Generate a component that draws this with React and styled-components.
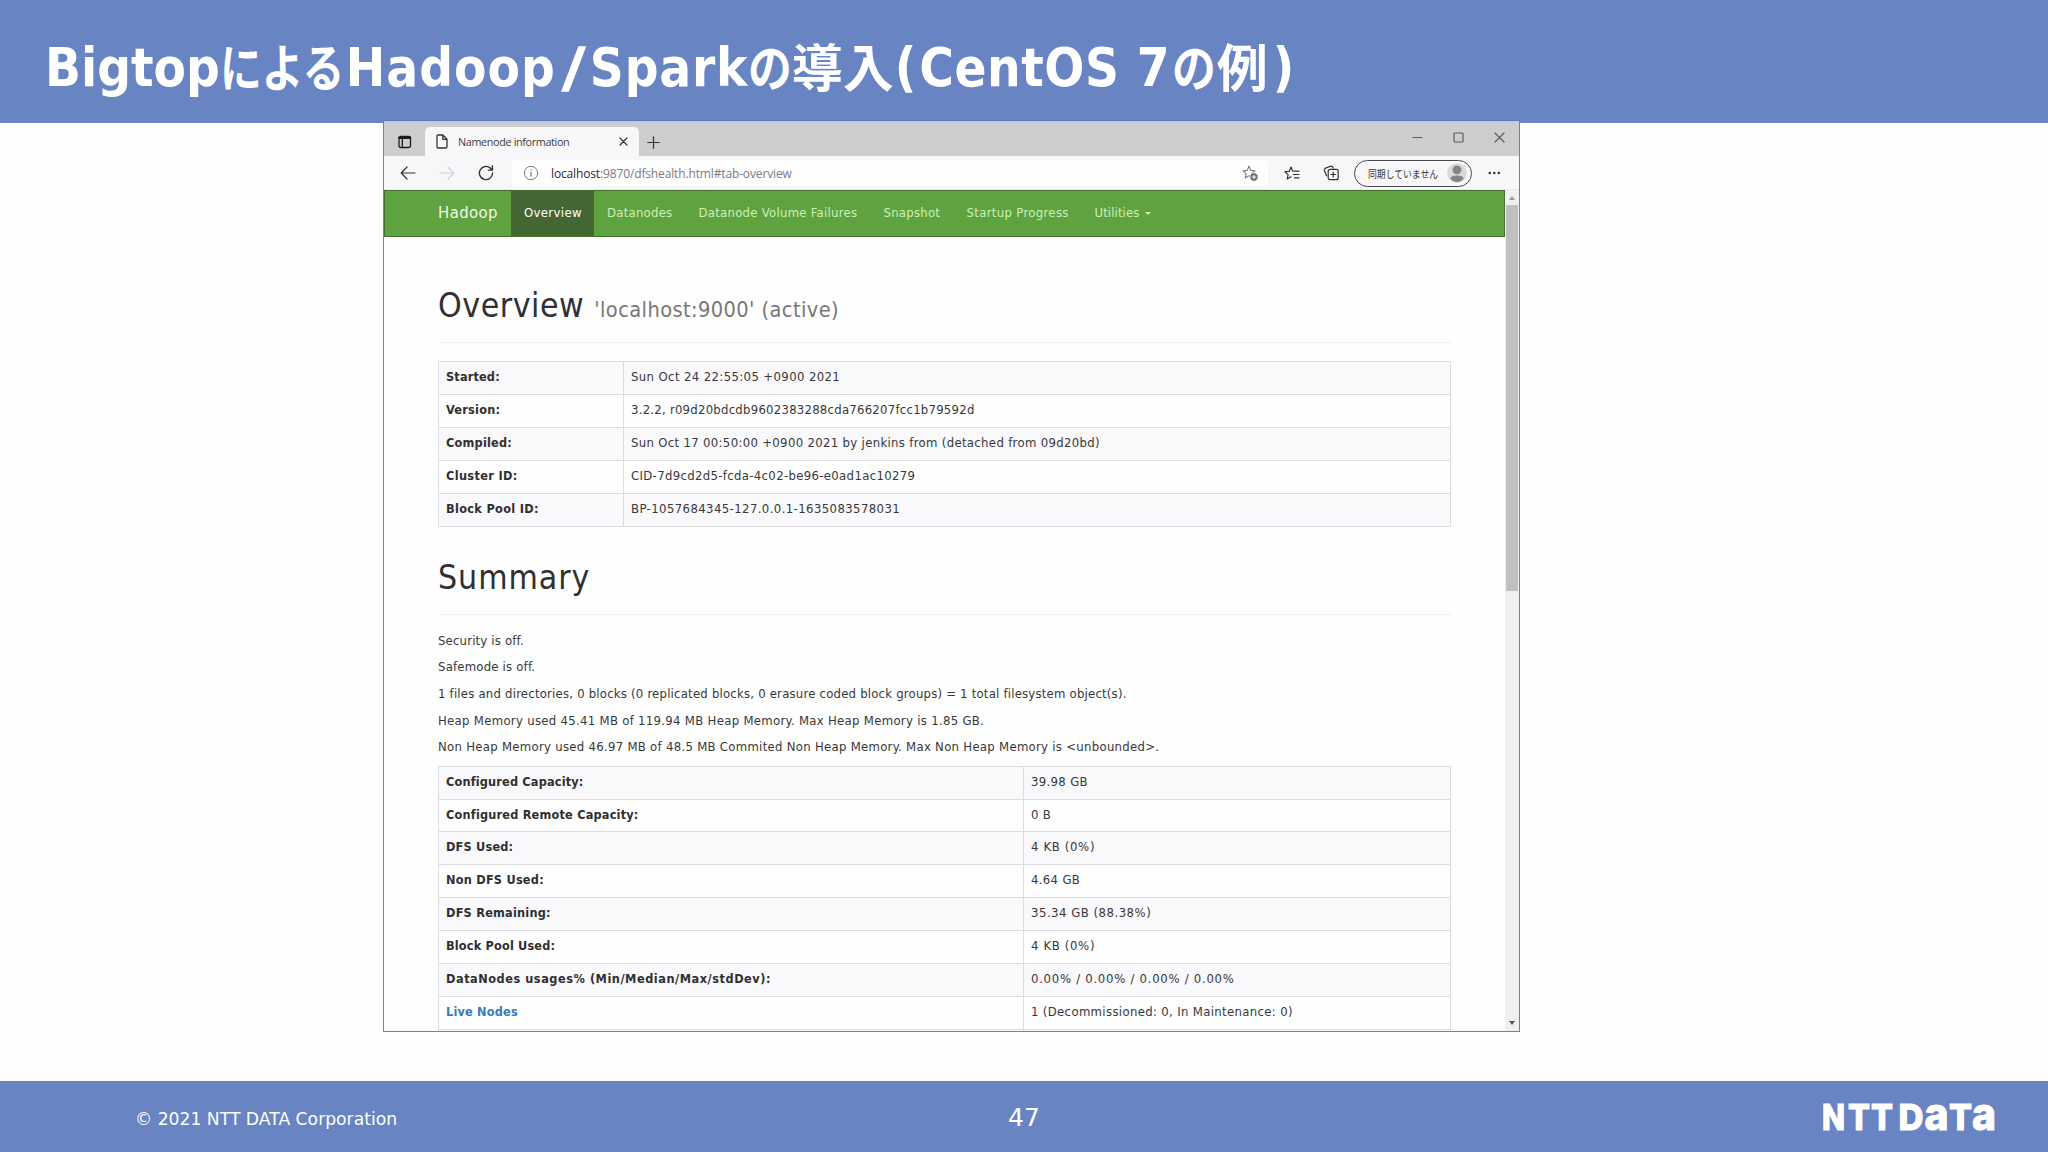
import React from "react";
import styled, { createGlobalStyle } from "styled-components";

const ui = '"DejaVu Sans Condensed", "DejaVu Sans", "Noto Sans CJK JP", sans-serif';
const uiWide = '"DejaVu Sans", "Noto Sans CJK JP", sans-serif';
const chrome = '"Open Sans", "Noto Sans", "Noto Sans CJK JP", sans-serif';

const GlobalStyle = createGlobalStyle`
  * { box-sizing: border-box; }
  body { margin: 0; background: #fefefe; overflow: hidden; }
`;

const Slide = styled.div`
  width: 2048px;
  height: 1152px;
  display: flex;
  flex-direction: column;
  background: #fefefe;
  font-family: ${ui};
  font-stretch: condensed;
`;

const TitleBar = styled.header`
  flex: none;
  height: 123px;
  padding: 31px 0 0 45px;
  background: #6884c2;
  color: #fff;
`;

const Title = styled.h1`
  margin: 0;
  display: flex;
  font-size: 52.5px;
  line-height: 74px;
  font-weight: 700;
  white-space: pre;
`;

const Latin = styled.span`
  width: ${(p) => (p.$width ? `${p.$width}px` : "auto")};
  letter-spacing: ${(p) => p.$track || 0}px;
`;

const Slash = styled.span`
  width: 31px;
  padding-left: 7px;
  font-weight: 400;
  -webkit-text-stroke: 1.6px #fff;
  transform: scaleX(1.4);
`;

const Japanese = styled.span`
  font-family: "Noto Sans CJK JP", sans-serif;
  font-size: 51px;
  line-height: 68px;
  width: ${(p) => p.$width}px;
  transform: scaleX(${(p) => p.$squeeze || 1});
  transform-origin: 0 50%;
`;

const Body = styled.main`
  flex: 1;
  min-height: 0;
  padding-left: 383px;
`;

const Footer = styled.footer`
  flex: none;
  height: 71px;
  display: grid;
  grid-template-columns: 1fr 60px 1fr;
  align-items: center;
  padding: 4px 52px 0;
  background: #6884c2;
  color: #fff;
  font-family: ${uiWide};
  font-stretch: normal;
`;

const Copyright = styled.span`
  margin-left: 83px;
  font-size: 17.2px;
`;

const PageNumber = styled.span`
  margin-top: -2px;
  font-size: 25px;
  text-align: center;
`;

const Logo = styled.svg`
  justify-self: end;
  display: block;
  overflow: visible;
  fill: #fff;
  stroke: #fff;
  stroke-width: 1px;
  font-family: Inter, sans-serif;
  font-weight: 800;
`;

const Window = styled.section`
  width: 1137px;
  height: 912px;
  margin-top: -3px;
  display: flex;
  flex-direction: column;
  border: 1px solid #808084;
  border-top-color: #65789f;
  background: #fefefe;
  position: relative;
  overflow: hidden;
`;

const TabStrip = styled.div`
  flex: none;
  height: 35px;
  display: flex;
  align-items: flex-end;
  background: #cdcccf;
  border-top: 2px solid #bccbe4;
`;

const StripIcon = styled.div`
  width: 41px;
  height: 28px;
  padding: 0 0 0 14px;
  display: flex;
  align-items: center;
`;

const Tab = styled.div`
  width: 214px;
  height: 29px;
  display: flex;
  align-items: center;
  padding: 0 11px 0 11px;
  border-radius: 5px 5px 0 0;
  background: #f8f8fa;
`;

const TabTitle = styled.span`
  flex: 1;
  margin-left: 10px;
  font-family: ${chrome};
  font-stretch: normal;
  font-size: 10.8px;
  letter-spacing: -0.35px;
  white-space: nowrap;
  color: #3b3b3d;
`;

const NewTab = styled.div`
  width: 30px;
  height: 28px;
  padding-left: 8px;
  display: flex;
  align-items: center;
`;

const WindowControls = styled.div`
  height: 37px;
  margin-left: auto;
  padding-right: 14px;
  display: flex;
  align-items: center;
  gap: 30px;
`;

const Toolbar = styled.div`
  flex: none;
  height: 34px;
  padding-top: 1px;
  display: flex;
  align-items: center;
  background: #f7f6f9;
  border-bottom: 1px solid #eceaee;
`;

const NavButtons = styled.div`
  width: 128px;
  padding-left: 16px;
  display: flex;
  align-items: center;
  gap: 23px;
`;

const AddressBar = styled.div`
  width: 756px;
  height: 26px;
  padding: 0 9px 0 11px;
  display: flex;
  align-items: center;
  border-radius: 4px;
  background: #fefefe;
`;

const Url = styled.span`
  flex: 1;
  margin-left: 12px;
  font-family: ${chrome};
  font-stretch: normal;
  font-size: 12px;
  letter-spacing: -0.14px;
  color: #7b7b7e;

  b {
    font-weight: 400;
    color: #2c2c2e;
  }
`;

const ToolbarActions = styled.div`
  display: flex;
  align-items: center;
  margin-left: 16px;
`;

const Favorites = styled.div`
  width: 39px;
  display: flex;
`;

const Collections = styled.div`
  width: 31px;
  display: flex;
`;

const Profile = styled.div`
  width: 118px;
  height: 27px;
  padding: 0 4px 0 13px;
  margin-right: 16px;
  display: flex;
  align-items: center;
  justify-content: space-between;
  border: 1.5px solid #48484b;
  border-radius: 14px;
  font-family: "Noto Sans CJK JP", sans-serif;
  font-size: 10.5px;
  color: #39393b;
  white-space: nowrap;
`;

const ProfileName = styled.span`
  width: 70px;
  transform: scaleX(0.84);
  transform-origin: 0 50%;
`;

const Viewport = styled.div`
  flex: 1;
  min-height: 0;
  display: flex;
`;

const Page = styled.div`
  width: 1121px;
  overflow: hidden;
  color: #38383b;
`;

const Navbar = styled.nav`
  height: 47px;
  display: flex;
  align-items: stretch;
  padding-left: 53px;
  border: 1px solid #46702f;
  background: #5fa341;
`;

const Brand = styled.span`
  width: 73px;
  font-size: 16.6px;
  line-height: 44px;
  letter-spacing: 0.4px;
  color: #f0fae6;
`;

const NavItem = styled.span`
  width: ${(p) => p.$width}px;
  padding-left: 13px;
  font-size: 13px;
  line-height: 44px;
  letter-spacing: ${(p) => p.$track || 0}px;
  white-space: nowrap;
  color: ${(p) => (p.$active ? "#fff" : "#cdf0b6")};
  background: ${(p) => (p.$active ? "#446633" : "transparent")};
`;

const Caret = styled.i`
  display: inline-block;
  margin-left: 6px;
  vertical-align: 2px;
  border: 3.5px solid transparent;
  border-top-color: #cdf0b6;
  border-bottom: 0;
`;

const Content = styled.div`
  padding: 52px 54px 0 54px;
`;

const PageHeader = styled.h2`
  margin: ${(p) => p.$top}px 0 ${(p) => p.$bottom}px;
  height: 54px;
  border-bottom: 1px solid #efeef1;
  font-size: 33.5px;
  line-height: 34.6px;
  font-weight: 400;
  letter-spacing: ${(p) => p.$track || 0}px;
  color: #303033;
  white-space: pre;
`;

const HeaderNote = styled.small`
  margin-left: 10px;
  font-size: 21.6px;
  letter-spacing: 0.42px;
  color: #777779;
`;

const Line = styled.p`
  margin: 0;
  font-size: 13px;
  line-height: 26.67px;
  letter-spacing: ${(p) => p.$track || 0}px;
  white-space: nowrap;
`;

const Table = styled.div`
  margin-top: ${(p) => p.$top || 0}px;
  border: 1px solid #dddce1;
  border-width: 1px 1px 0 1px;
`;

const Row = styled.div`
  display: grid;
  grid-template-columns: ${(p) => p.$first}px 1fr;
  height: 32.89px;
  border-bottom: 1px solid #dddce1;
  font-size: 13px;
  line-height: 30px;
  white-space: nowrap;
  background: ${(p) => (p.$odd ? "#f9f8fb" : "#fefefe")};
`;

const Label = styled.span`
  padding-left: 7px;
  border-right: 1px solid #dddce1;
  font-size: 12.6px;
  font-weight: 700;
  letter-spacing: ${(p) => p.$track || 0}px;
  color: ${(p) => (p.$link ? "#3a7ab8" : "#2f2f32")};
`;

const Value = styled.span`
  padding-left: 7px;
  letter-spacing: ${(p) => p.$track || 0}px;
`;

const Scrollbar = styled.div`
  width: 14px;
  display: flex;
  flex-direction: column;
  align-items: center;
  background: #f0eff2;
`;

const ScrollArrow = styled.i`
  margin: ${(p) => (p.$down ? "auto 0 6px" : "6px 0 5px")};
  border: 3px solid transparent;
  border-width: ${(p) => (p.$down ? "4px 3px 0" : "0 3px 4px")};
  border-top-color: ${(p) => (p.$down ? "#555" : "transparent")};
  border-bottom-color: ${(p) => (p.$down ? "transparent" : "#99999b")};
`;

const Thumb = styled.div`
  width: 12px;
  height: 386px;
  background: #bfbfc1;
`;

const IconSvg = styled.svg`
  flex: none;
  display: block;
  fill: none;
  stroke-linecap: round;
  stroke-linejoin: round;
`;

const Icon = ({ w, h, color = "#333", sw = 1.2, children }) => (
  <IconSvg width={w} height={h} viewBox={`0 0 ${w} ${h}`} stroke={color} strokeWidth={sw}>
    {children}
  </IconSvg>
);

const overview = [
  { label: "Started:", lt: 0.16, value: "Sun Oct 24 22:55:05 +0900 2021", vt: 0.38 },
  { label: "Version:", lt: 0.25, value: "3.2.2, r09d20bdcdb9602383288cda766207fcc1b79592d", vt: 0.245 },
  { label: "Compiled:", lt: 0.22, value: "Sun Oct 17 00:50:00 +0900 2021 by jenkins from (detached from 09d20bd)", vt: 0.325 },
  { label: "Cluster ID:", lt: 0.35, value: "CID-7d9cd2d5-fcda-4c02-be96-e0ad1ac10279", vt: 0.33 },
  { label: "Block Pool ID:", lt: 0.33, value: "BP-1057684345-127.0.0.1-1635083578031", vt: 0.4 },
];

const lines = [
  ["Security is off.", 0.18],
  ["Safemode is off.", 0.2],
  ["1 files and directories, 0 blocks (0 replicated blocks, 0 erasure coded block groups) = 1 total filesystem object(s).", 0.212],
  ["Heap Memory used 45.41 MB of 119.94 MB Heap Memory. Max Heap Memory is 1.85 GB.", 0.3],
  ["Non Heap Memory used 46.97 MB of 48.5 MB Commited Non Heap Memory. Max Non Heap Memory is <unbounded>.", 0.288],
];

const summary = [
  { label: "Configured Capacity:", lt: 0.17, value: "39.98 GB", vt: 0.33 },
  { label: "Configured Remote Capacity:", lt: 0.2, value: "0 B", vt: 0.3 },
  { label: "DFS Used:", lt: 0.2, value: "4 KB (0%)", vt: 0.65 },
  { label: "Non DFS Used:", lt: 0.24, value: "4.64 GB", vt: 0.33 },
  { label: "DFS Remaining:", lt: 0.23, value: "35.34 GB (88.38%)", vt: 0.5 },
  { label: "Block Pool Used:", lt: 0.17, value: "4 KB (0%)", vt: 0.65 },
  { label: "DataNodes usages% (Min/Median/Max/stdDev):", lt: 0.54, value: "0.00% / 0.00% / 0.00% / 0.00%", vt: 0.72 },
  { label: "Live Nodes", lt: 0.2, value: "1 (Decommissioned: 0, In Maintenance: 0)", vt: 0.34, link: true },
  { label: "", value: "" },
];

const navItems = [
  ["Overview", 83, 0.35],
  ["Datanodes", 91.5, 0.25],
  ["Datanode Volume Failures", 185, 0.27],
  ["Snapshot", 83, 0.25],
  ["Startup Progress", 128, 0.33],
  ["Utilities", 90, 0.1],
];

const star = "M7 1 L8.8 5.4 L13 5.7 L10 8.6 L10.6 13 L7 10.8 L3.2 13 L4.1 8.6 L1 5.7 L5.2 5.4 Z";

function DataTable({ rows, first, top }) {
  return (
    <Table $top={top}>
      {rows.map((row, i) => (
        <Row key={i} $first={first} $odd={i % 2 === 0}>
          <Label $link={row.link} $track={row.lt}>{row.label}</Label>
          <Value $track={row.vt}>{row.value}</Value>
        </Row>
      ))}
    </Table>
  );
}

function Browser() {
  return (
    <Window>
      <TabStrip>
        <StripIcon>
          <Icon w={14} h={14} color="#1c1c1e" sw={1.3}>
            <rect x="1" y="1.5" width="11.5" height="11" rx="1.8" />
            <path d="M1.5 2.8H12" strokeWidth="2.6" />
            <path d="M4.3 4V12.5" />
          </Icon>
        </StripIcon>
        <Tab>
          <Icon w={12} h={15} sw={1.3}>
            <path d="M1 2.2Q1 1 2.2 1H6.8L11 5.3V12.8Q11 14 9.8 14H2.2Q1 14 1 12.8Z M6.8 1V5.3H11" />
          </Icon>
          <TabTitle>Namenode information</TabTitle>
          <Icon w={9} h={9}><path d="M1 1L8 8M8 1L1 8" /></Icon>
        </Tab>
        <NewTab>
          <Icon w={13} h={13}><path d="M6.5 .8V12.2M.8 6.5H12.2" /></Icon>
        </NewTab>
        <WindowControls>
          <Icon w={11} h={11} color="#5d5d60" sw={1}><path d="M1 5.5H10" /></Icon>
          <Icon w={11} h={11} color="#5d5d60"><rect x="1" y="1" width="9" height="9" rx="1" /></Icon>
          <Icon w={11} h={11} color="#5d5d60"><path d="M1 1L10 10M10 1L1 10" /></Icon>
        </WindowControls>
      </TabStrip>
      <Toolbar>
        <NavButtons>
          <Icon w={16} h={14}><path d="M15 7H1.2M7 1L1.2 7L7 13" /></Icon>
          <Icon w={16} h={14} color="#d2d1d5"><path d="M1 7H14.8M9 1L14.8 7L9 13" /></Icon>
          <Icon w={16} h={16} sw={1.4}>
            <path d="M14.6 8A6.6 6.6 0 1 1 12.6 3.3L14.3 5M14.4 1V5.1H10.4" />
          </Icon>
        </NavButtons>
        <AddressBar>
          <Icon w={16} h={16} color="#7c7c7f" sw={1}>
            <circle cx="8" cy="8" r="6.7" />
            <path d="M8 7.3V11M8 4.8V5" strokeWidth="1.3" />
          </Icon>
          <Url><b>localhost</b>:9870/dfshealth.html#tab-overview</Url>
          <Icon w={17} h={17} color="#7c7c7f" sw={1.1}>
            <path d={star} />
            <circle cx="12" cy="12" r="4.2" fill="#68686b" stroke="#fefefe" strokeWidth=".8" />
            <path d="M12 10.2V13.8M10.2 12H13.8" stroke="#fefefe" />
          </Icon>
        </AddressBar>
        <ToolbarActions>
          <Favorites>
            <Icon w={17} h={15} sw={1.2}>
              <path d="M9.3 5.2H8.8L7 1L5.2 5.4L1 5.7L4.1 8.6L3.2 13L7 10.8" />
              <path d="M10.5 5.2H15M9.5 8.5H15M10.5 11.8H15" />
            </Icon>
          </Favorites>
          <Collections>
            <Icon w={17} h={16} sw={1.2}>
              <path d="M3.5 10.8L1.3 5.2Q1 4 2 3.4L7.5 1.2Q9 .8 9.8 2.2L10.2 3" />
              <rect x="5.2" y="4.3" width="10" height="10.4" rx="2" />
              <path d="M10.2 7V12M7.7 9.5H12.7" />
            </Icon>
          </Collections>
          <Profile>
            <ProfileName>同期していません</ProfileName>
            <Icon w={20} h={20} color="none">
              <circle cx="10" cy="10" r="9.8" fill="#d9d8da" />
              <circle cx="10" cy="6.8" r="4.4" fill="#858588" />
              <path d="M3.3 15.5Q4 12.6 10 12.6T16.7 15.5Q14 19 10 19T3.3 15.5Z" fill="#858588" />
            </Icon>
          </Profile>
          <Icon w={13} h={4} color="none">
            <g fill="#333"><circle cx="1.8" cy="2" r="1.3" /><circle cx="6.3" cy="2" r="1.3" /><circle cx="10.8" cy="2" r="1.3" /></g>
          </Icon>
        </ToolbarActions>
      </Toolbar>
      <Viewport>
        <Page>
          <Navbar>
            <Brand>Hadoop</Brand>
            {navItems.map(([name, width, track], i) => (
              <NavItem key={name} $width={width} $track={track} $active={i === 0}>
                {name}{name === "Utilities" && <Caret />}
              </NavItem>
            ))}
          </Navbar>
          <Content>
            <PageHeader $top={0} $bottom={18.3} $track={0.55}>
              Overview<HeaderNote>'localhost:9000' (active)</HeaderNote>
            </PageHeader>
            <DataTable rows={overview} first={185} />
            <PageHeader $top={34.3} $bottom={12.7} $track={0.95}>Summary</PageHeader>
            {lines.map(([line, track]) => <Line key={line} $track={track}>{line}</Line>)}
            <DataTable rows={summary} first={585} top={4.7} />
          </Content>
        </Page>
        <Scrollbar>
          <ScrollArrow />
          <Thumb />
          <ScrollArrow $down />
        </Scrollbar>
      </Viewport>
    </Window>
  );
}

const logoLetters = [
  ["N", 0, 23, 35],
  ["T", 26, 22, 35],
  ["T", 49, 22, 35],
  ["D", 76.5, 25, 35],
  ["a", 102.5, 24, 45],
  ["T", 127, 23, 35],
  ["a", 150, 24, 45],
];

export default function App() {
  return (
    <>
      <GlobalStyle />
      <Slide>
        <TitleBar>
          <Title>
            <Latin>Bigtop</Latin>
            <Japanese $width={126} $squeeze={0.82}>による</Japanese>
            <Latin $width={213} $track={1}>Hadoop</Latin>
            <Slash>/</Slash>
            <Latin $width={158} $track={0.8}>Spark</Latin>
            <Japanese $width={44} $squeeze={0.86}>の</Japanese>
            <Japanese $width={103}>導入</Japanese>
            <Latin $width={24.5}>(</Latin>
            <Latin $width={217.5} $track={0.5}>CentOS</Latin>
            <Latin $width={35}>7</Latin>
            <Japanese $width={45} $squeeze={0.86}>の</Japanese>
            <Japanese $width={56}>例</Japanese>
            <Latin>)</Latin>
          </Title>
        </TitleBar>
        <Body><Browser /></Body>
        <Footer>
          <Copyright>© 2021 NTT DATA Corporation</Copyright>
          <PageNumber>47</PageNumber>
          <Logo width="174" height="44" viewBox="0 0 174 44">
            {logoLetters.map(([c, x, w, size], i) => (
              <text key={i} x={x} y="33" fontSize={size} textLength={w} lengthAdjust="spacingAndGlyphs">{c}</text>
            ))}
          </Logo>
        </Footer>
      </Slide>
    </>
  );
}
